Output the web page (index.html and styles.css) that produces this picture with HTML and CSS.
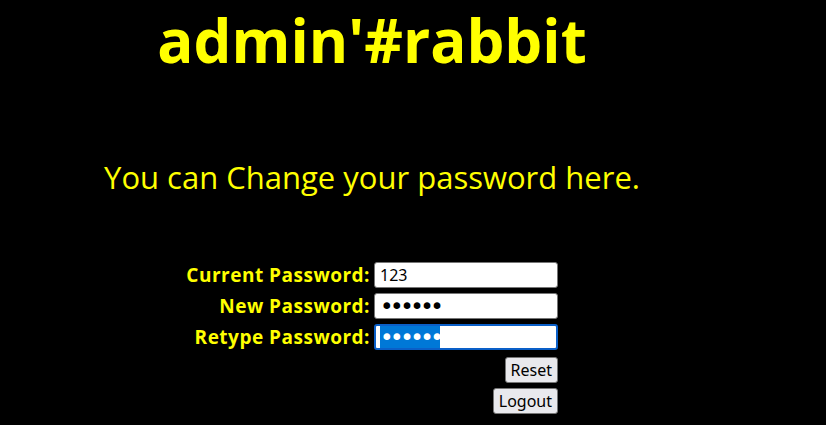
FILE: index.html
```html
<!DOCTYPE html>
<html>
<head>
    <meta charset="UTF-8">
    <title>Change password</title>
    <link rel="stylesheet" href="styles.css">
</head>
<body>
    <div class="page">
        <h1 class="site-title">admin'#rabbit</h1>
        <p class="intro">You can Change your password here.</p>
        <form id="pass-form" class="pass-form">
            <label for="cur-pass" class="form-label">Current Password:</label>
            <input type="text" id="cur-pass" class="form-input" value="123">
            <label for="new-pass" class="form-label">New Password:</label>
            <input type="password" id="new-pass" class="form-input pass-input" value="123456">
            <label for="re-pass" class="form-label">Retype Password:</label>
            <input type="password" id="re-pass" class="form-input pass-input" value="123456">
            <div class="form-actions">
                <button type="reset">Reset</button>
                <button type="button">Logout</button>
            </div>
        </form>
    </div>
    <script src="script.js"></script>
</body>
</html>
```

FILE: styles.css
```css
body {
    margin: 0;
    background-color: #000;
    color: #ff0;
    font-family: "Open Sans", "Noto Sans", sans-serif;
}

.page {
    width: 728px;
    margin-left: 8px;
    text-align: center;
}

.site-title {
    margin: 0;
    padding-top: 2px;
    font-size: 60px;
    font-weight: bold;
    line-height: 76px;
}

.intro {
    margin: 77px 0 0;
    font-size: 31px;
    line-height: 44px;
}

.pass-form {
    display: grid;
    grid-template-columns: 362px 184px;
    column-gap: 4px;
    row-gap: 5px;
    margin-top: 63px;
}

.form-label {
    text-align: right;
    font-size: 19px;
    font-weight: bold;
    letter-spacing: 0.5px;
    line-height: 26px;
}

.form-input {
    box-sizing: border-box;
    width: 184px;
    height: 26px;
    padding: 1px 5px;
    border: 1px solid #767676;
    border-radius: 3px;
    background-color: #fff;
    font-family: "Noto Sans", sans-serif;
    font-size: 16px;
    color: #000;
}

.pass-input {
    padding: 0 5px;
    font-family: "DejaVu Sans", sans-serif;
    font-size: 23px;
    letter-spacing: -3.5px;
}

.form-input:focus {
    outline: none;
    border: 2px solid #0a5fc8;
    box-shadow: 0 0 0 1px #fff inset;
    padding: 0 4px;
}

.form-input::selection {
    background-color: #0078d7;
    color: #fff;
}

.form-actions {
    grid-column: 2;
    display: flex;
    flex-direction: column;
    align-items: flex-end;
    gap: 5px;
    margin-top: 2px;
}

.form-actions button {
    height: 26px;
    padding: 0 5px;
    border: 1px solid #767676;
    border-radius: 3px;
    background-color: #e9e9ed;
    font-family: "Noto Sans", sans-serif;
    font-size: 16px;
    color: #000;
}
```

FILE: script.js
```js
// select the retyped password, like after tabbing into it
var re = document.getElementById('re-pass');
re.focus();
re.select();
```
